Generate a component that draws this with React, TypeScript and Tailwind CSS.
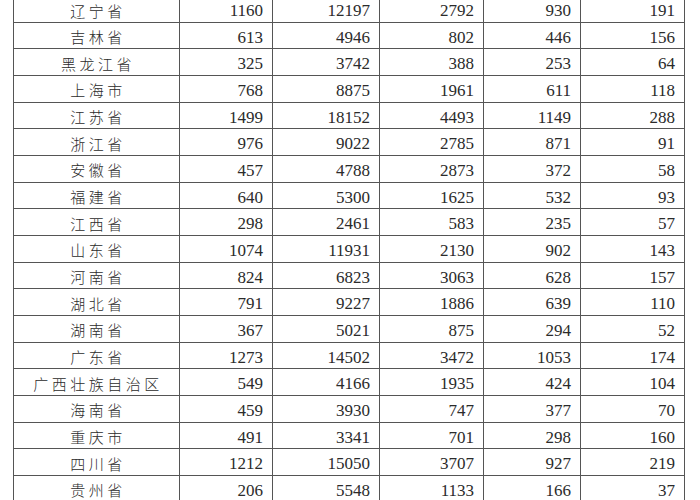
const rows: [string, number, number, number, number, number][] = [
  ["辽宁省", 1160, 12197, 2792, 930, 191],
  ["吉林省", 613, 4946, 802, 446, 156],
  ["黑龙江省", 325, 3742, 388, 253, 64],
  ["上海市", 768, 8875, 1961, 611, 118],
  ["江苏省", 1499, 18152, 4493, 1149, 288],
  ["浙江省", 976, 9022, 2785, 871, 91],
  ["安徽省", 457, 4788, 2873, 372, 58],
  ["福建省", 640, 5300, 1625, 532, 93],
  ["江西省", 298, 2461, 583, 235, 57],
  ["山东省", 1074, 11931, 2130, 902, 143],
  ["河南省", 824, 6823, 3063, 628, 157],
  ["湖北省", 791, 9227, 1886, 639, 110],
  ["湖南省", 367, 5021, 875, 294, 52],
  ["广东省", 1273, 14502, 3472, 1053, 174],
  ["广西壮族自治区", 549, 4166, 1935, 424, 104],
  ["海南省", 459, 3930, 747, 377, 70],
  ["重庆市", 491, 3341, 701, 298, 160],
  ["四川省", 1212, 15050, 3707, 927, 219],
  ["贵州省", 206, 5548, 1133, 166, 37],
];

const numCell =
  "border-r border-[#555] flex items-center justify-end pr-[9px] pt-[2px]";

export default function App() {
  return (
    <div className="h-[500px] w-[700px] overflow-hidden bg-white">
      <div className="ml-[13px] mt-[-4px] w-[672px] border-l border-[#555] text-[#2b2b2b]">
        {rows.map(([name, a, b, c, d, e]) => (
          <div
            key={name}
            className="grid h-[26.67px] grid-cols-[166px_93px_107px_104px_97px_104px] border-b border-[#555]"
          >
            <div className="flex items-center justify-center border-r border-[#555] pt-[2px] font-['Noto_Sans_CJK_SC',sans-serif] text-[15px] font-light tracking-[3.5px] pl-[3px]">
              {name}
            </div>
            {[a, b, c, d, e].map((v, i) => (
              <div
                key={i}
                className={`${numCell} font-['Liberation_Serif',serif] text-[17px]`}
              >
                {v}
              </div>
            ))}
          </div>
        ))}
      </div>
    </div>
  );
}
